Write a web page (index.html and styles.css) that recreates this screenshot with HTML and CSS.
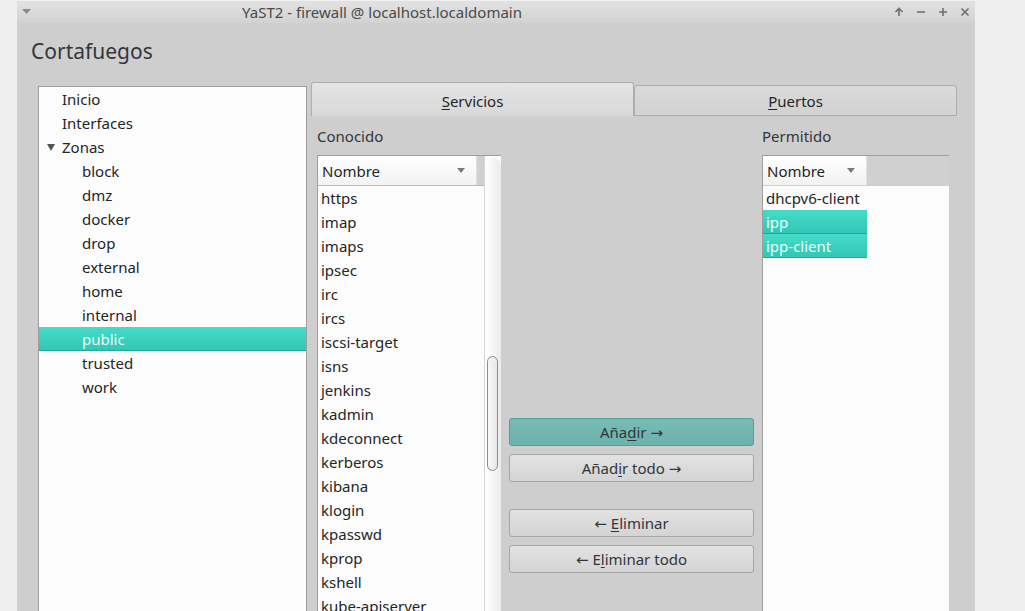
FILE: index.html
```html
<!DOCTYPE html>
<html lang="es">
<head>
<meta charset="utf-8">
<title>YaST2 - firewall</title>
<link rel="stylesheet" href="styles.css">
</head>
<body>
<div class="window">
  <div class="titlebar">
    <svg class="menu-ico" width="9" height="6" viewBox="0 0 9 6"><path d="M0 0 H9 L4.5 5 Z" fill="#8a8a8a"/></svg>
    <div class="title">YaST2 - firewall @ localhost.localdomain</div>
    <div class="wbtns">
      <svg width="10" height="10" viewBox="0 0 10 10"><path d="M5 9 V1.5 M1.5 5 L5 1.5 L8.5 5" stroke="#6e6e6e" stroke-width="1.6" fill="none"/></svg>
      <svg width="10" height="10" viewBox="0 0 10 10"><path d="M1 5 H9" stroke="#6e6e6e" stroke-width="1.6"/></svg>
      <svg width="10" height="10" viewBox="0 0 10 10"><path d="M1 5 H9 M5 1 V9" stroke="#6e6e6e" stroke-width="1.6"/></svg>
      <svg width="10" height="10" viewBox="0 0 10 10"><path d="M1.5 1.5 L8.5 8.5 M8.5 1.5 L1.5 8.5" stroke="#6e6e6e" stroke-width="1.6"/></svg>
    </div>
  </div>
  <div class="heading">Cortafuegos</div>
  <div class="main">
    <div class="tree">
      <div class="trow l1">Inicio</div>
      <div class="trow l1">Interfaces</div>
      <div class="trow l1 open"><svg class="exp" width="8" height="7" viewBox="0 0 8 7"><path d="M0 0 H8 L4 7 Z" fill="#555"/></svg>Zonas</div>
      <div class="trow l2">block</div>
      <div class="trow l2">dmz</div>
      <div class="trow l2">docker</div>
      <div class="trow l2">drop</div>
      <div class="trow l2">external</div>
      <div class="trow l2">home</div>
      <div class="trow l2">internal</div>
      <div class="trow l2 sel">public</div>
      <div class="trow l2">trusted</div>
      <div class="trow l2">work</div>
    </div>
    <div class="tabs">
      <div class="tabbar">
        <div class="tab active"><u>S</u>ervicios</div>
        <div class="tab"><u>P</u>uertos</div>
      </div>
      <div class="pane">
        <div class="col col-left">
          <div class="lbl">Conocido</div>
          <div class="listbox known">
            <div class="lb-main">
              <div class="hdr-row"><div class="hdr hdr-left">Nombre<span class="arrow"></span></div><div class="hdr-fill"></div></div>
              <div class="items">
                <div class="item">https</div>
                <div class="item">imap</div>
                <div class="item">imaps</div>
                <div class="item">ipsec</div>
                <div class="item">irc</div>
                <div class="item">ircs</div>
                <div class="item">iscsi-target</div>
                <div class="item">isns</div>
                <div class="item">jenkins</div>
                <div class="item">kadmin</div>
                <div class="item">kdeconnect</div>
                <div class="item">kerberos</div>
                <div class="item">kibana</div>
                <div class="item">klogin</div>
                <div class="item">kpasswd</div>
                <div class="item">kprop</div>
                <div class="item">kshell</div>
                <div class="item">kube-apiserver</div>
              </div>
            </div>
            <div class="scrollbar"><div class="handle"></div></div>
          </div>
        </div>
        <div class="col col-mid">
          <button class="btn primary">Aña<u>d</u>ir →</button>
          <button class="btn">Añad<u>i</u>r todo →</button>
          <button class="btn btn-gap">← <u>E</u>liminar</button>
          <button class="btn">← E<u>l</u>iminar todo</button>
        </div>
        <div class="col col-right">
          <div class="lbl">Permitido</div>
          <div class="listbox allowed">
            <div class="hdr-row"><div class="hdr hdr-right">Nombre<span class="arrow"></span></div><div class="hdr-fill"></div></div>
            <div class="items">
              <div class="item">dhcpv6-client</div>
              <div class="item sel">ipp</div>
              <div class="item sel">ipp-client</div>
            </div>
          </div>
        </div>
      </div>
    </div>
  </div>
</div>
</body>
</html>
```

FILE: styles.css
```css
* { box-sizing: border-box; }
html, body { margin: 0; padding: 0; }
body {
  background: #efefef;
  font-family: "Noto Sans", "DejaVu Sans", sans-serif;
  color: #232627;
  overflow: hidden;
  height: 611px;
}
u { text-decoration: underline; text-underline-offset: 2px; text-decoration-thickness: 1px; }

.window {
  margin: 1px 0 0 17px;
  width: 958px;
  height: 610px;
  background: #cecece;
  overflow: hidden;
  display: flex;
  flex-direction: column;
}

.titlebar {
  height: 22px;
  flex: none;
  display: flex;
  align-items: center;
  background: linear-gradient(#e2e2e2, #d2d2d2);
  font-size: 15px;
  color: #4a4a4a;
}
.menu-ico { margin-left: 5px; }
.title { flex: 1; padding-left: 211px; line-height: 22px; }
.wbtns { display: flex; gap: 12px; margin-right: 5px; }

.heading {
  height: 59px;
  flex: none;
  padding: 14px 0 0 14px;
  font-size: 21px;
  line-height: 28px;
  color: #31363b;
}

.main {
  flex: 1;
  display: flex;
  gap: 4px;
  padding-left: 21px;
}

.tree {
  width: 269px;
  margin-top: 4px;
  background: #fcfcfc;
  border-left: 1px solid #9e9e9e;
  border-top: 1px solid #9e9e9e;
  border-right: 1px solid #9e9e9e;
  font-size: 15px;
}
.trow {
  height: 24px;
  line-height: 24px;
  display: flex;
  align-items: center;
  white-space: nowrap;
}
.trow.l1 { padding-left: 23px; }
.trow.l2 { padding-left: 43px; }
.trow.open { padding-left: 8px; }
.exp { margin-right: 7px; }
.trow.sel, .item.sel {
  background: linear-gradient(#44dcc9, #33c6b4);
  border-bottom: 1px solid #2aa697;
  color: #eafffb;
}

.tabs {
  width: 646px;
  display: flex;
  flex-direction: column;
}
.tabbar {
  height: 34px;
  display: flex;
  align-items: flex-end;
}
.tab {
  font-size: 15px;
  text-align: center;
  border: 1px solid #adadad;
  border-radius: 3px 3px 0 0;
}
.tab.active {
  width: 323px;
  height: 34px;
  line-height: 36px;
  border-bottom: none;
  background: linear-gradient(#e4e4e4, #d8d8d8);
}
.tab:not(.active) {
  width: 323px;
  height: 31px;
  line-height: 31px;
  background: linear-gradient(#dadada, #d2d2d2);
}

.pane {
  display: flex;
  padding: 8px 8px 0 6px;
  gap: 8px;
}
.col { display: flex; flex-direction: column; }
.col-left { width: 184px; }
.col-mid { width: 245px; padding-top: 294px; gap: 8px; }
.col-right { width: 187px; }
.lbl {
  font-size: 15px;
  line-height: 24px;
  height: 24px;
  margin-bottom: 7px;
  color: #31363b;
}

.listbox {
  height: 470px;
  background: #fcfcfc;
  border-left: 1px solid #9e9e9e;
  border-top: 1px solid #9e9e9e;
  font-size: 15px;
}
.known { display: flex; }
.lb-main { width: 167px; border-right: 1px solid #d6d6d6; }
.hdr-row { display: flex; height: 30px; border-bottom: 1px solid #bdbdbd; }
.hdr {
  height: 29px;
  line-height: 29px;
  padding: 1px 0 0 4px;
  background: linear-gradient(#ffffff, #f2f2f2);
  position: relative;
  border-right: 1px solid #e0e0e0;
}
.hdr-left { width: 159px; }
.hdr-right { width: 104px; }
.hdr-fill { flex: 1; background: #d0d0d0; }
.allowed .hdr-row { border-bottom-color: #d0d0d0; }
.arrow {
  position: absolute;
  right: 11px;
  top: 12px;
  border-left: 4px solid transparent;
  border-right: 4px solid transparent;
  border-top: 5px solid #7a7a7a;
}
.item {
  height: 24px;
  line-height: 24px;
  padding-left: 3px;
  white-space: nowrap;
}
.allowed .item { width: 104px; }

.scrollbar {
  width: 16px;
  margin-top: 2px;
  border-radius: 8px 8px 0 0;
  background: linear-gradient(90deg, #ffffff, #ebebeb);
  position: relative;
}
.handle {
  position: absolute;
  left: 2px;
  top: 198px;
  width: 11px;
  height: 115px;
  border: 1px solid #8c8c8c;
  border-radius: 6px;
  background: linear-gradient(90deg, #f8f8f8, #e6e6e6);
}

.btn {
  height: 28px;
  width: 245px;
  font-family: inherit;
  font-size: 15px;
  color: #31363b;
  border: 1px solid #a6a6a6;
  border-radius: 3px;
  background: linear-gradient(#e2e2e2, #d4d4d4);
  padding: 0;
  line-height: 26px;
}
.btn.primary {
  background: linear-gradient(#78bdb5, #6bb2aa);
  border-color: #52a096;
}
.btn-gap { margin-top: 19px; }
```
